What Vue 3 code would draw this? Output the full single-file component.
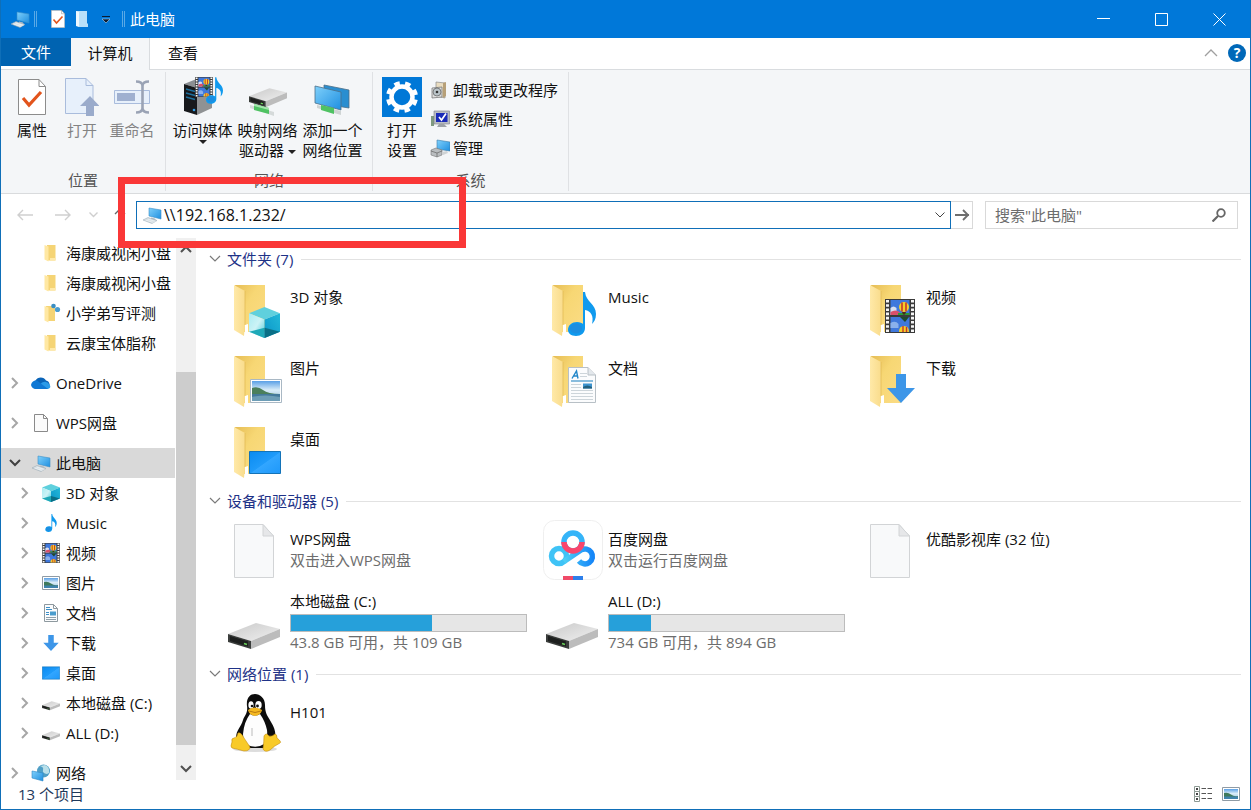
<template>
  <div class="window">
    <!-- 图标库 -->
    <svg class="sprite" width="0" height="0" aria-hidden="true">
      <defs>
        <linearGradient id="g-flap" x1="0" y1="0" x2="1" y2="0">
          <stop offset="0" stop-color="#ffe9a8" />
          <stop offset="1" stop-color="#f9dc8c" />
        </linearGradient>
        <linearGradient id="g-back" x1="0" y1="0" x2="1" y2="1">
          <stop offset="0" stop-color="#e6bd55" />
          <stop offset="0.4" stop-color="#f7d774" />
          <stop offset="1" stop-color="#fbdc85" />
        </linearGradient>
        <linearGradient id="g-screen" x1="0" y1="0" x2="1" y2="1">
          <stop offset="0" stop-color="#7fd0fb" />
          <stop offset="1" stop-color="#1e8fe0" />
        </linearGradient>
        <linearGradient id="g-desk" x1="0" y1="0" x2="1" y2="1">
          <stop offset="0" stop-color="#0a8bf0" />
          <stop offset="0.5" stop-color="#1f9bfa" />
          <stop offset="0.52" stop-color="#32a6ff" />
          <stop offset="1" stop-color="#1e98fa" />
        </linearGradient>
        <linearGradient id="g-cube-l" x1="0" y1="0" x2="1" y2="1">
          <stop offset="0" stop-color="#a8ecf2" />
          <stop offset="0.5" stop-color="#cdf3f6" />
          <stop offset="1" stop-color="#45cad8" />
        </linearGradient>
        <linearGradient id="g-cube-r" x1="1" y1="0" x2="0" y2="1">
          <stop offset="0" stop-color="#23b9d8" />
          <stop offset="1" stop-color="#0a94c8" />
        </linearGradient>
        <linearGradient id="g-sky" x1="0" y1="0" x2="0" y2="1">
          <stop offset="0" stop-color="#5aa0e6" />
          <stop offset="0.45" stop-color="#d9ecf8" />
          <stop offset="1" stop-color="#9cc3dd" />
        </linearGradient>
        <linearGradient id="g-metal" x1="0" y1="0" x2="1" y2="1">
          <stop offset="0" stop-color="#c9c9c9" />
          <stop offset="1" stop-color="#f0f0f0" />
        </linearGradient>
        <linearGradient id="g-ring" x1="0" y1="0" x2="1" y2="0">
          <stop offset="0" stop-color="#4fd0f5" />
          <stop offset="1" stop-color="#1687f8" />
        </linearGradient>
      </defs>

      <symbol id="i-pc" viewBox="0 0 20 20">
        <path d="M7 3l12 2v9L7 11z" fill="url(#g-screen)" stroke="#3b8fc8" stroke-width=".6" />
        <path d="M9 12.500l4 1 1 2-5-1z" fill="#b4bec5" />
        <path d="M1 15l5-2.500 9 3-5 3z" fill="#d5dde2" stroke="#93a5b0" stroke-width=".5" />
        <path d="M3.500 15l8 2.500M5.500 14l8 2.500" stroke="#f7fafc" stroke-width=".6" />
      </symbol>
      <symbol id="i-folder" viewBox="0 0 60 60">
        <path d="M10 7h30v47H18z" fill="url(#g-back)" />
        <path d="M9 7l11 6v34l-1 11-10-6z" fill="url(#g-flap)" />
        <path d="M20 13v34" stroke="#e0b850" stroke-width=".7" />
        <path d="M20 47l3-1v8h-3z" fill="#fff" />
      </symbol>
      <symbol id="i-cube" viewBox="0 0 30 30">
        <path d="M15 0l15 6-15 6L0 6z" fill="#5fd0dd" />
        <path d="M0 6l15 6v18L0 24z" fill="url(#g-cube-l)" />
        <path d="M30 6l-15 6v18l15-6z" fill="url(#g-cube-r)" />
        <path d="M0 24l15-4v10z" fill="#1fa9b8" />
        <path d="M15 20l15 4-15 6z" fill="#0a6f86" />
      </symbol>
      <symbol id="i-note" viewBox="0 0 28 44">
        <path d="M15 0h2c1 10 11 12 11 22 0 5-2 8-4 10 2-8-1-13-7-14v18c0 5-4 8-9 8s-8-3-8-6c0-5 4-8 9-8 3 0 5 1 6 2z" fill="#109aee" />
        <ellipse cx="8" cy="36.500" rx="6" ry="5" fill="#1c8ee0" />
      </symbol>
      <symbol id="i-film" viewBox="0 0 30 34">
        <path d="M0 0h30v34H0z" fill="#3a3a3a" />
        <path d="M2.500 1v32M27.500 1v32" stroke="#f5f5f5" stroke-width="3" stroke-dasharray="2.600 1.600" />
        <path d="M5.500 1h19v15h-19z" fill="#3f78dc" />
        <path d="M5.500 18h19v15h-19z" fill="#3f78dc" />
        <path d="M5.500 9q3-3 6 0v7h-6z" fill="#d7dff0" />
        <path d="M5.500 13q5-3 9 0v3h-9z" fill="#d9506a" />
        <path d="M13 14h11.500v2H13z" fill="#2f9a35" />
        <circle cx="19" cy="8" r="5" fill="#f3cf2b" />
        <path d="M17 3.500v9M21 3.500v9" stroke="#c83628" stroke-width="1.600" />
        <path d="M17 13h4l-1 2.500h-2z" fill="#4b2b18" />
        <path d="M15 18h9l-4 5z" fill="#1f4a2b" />
        <path d="M5.500 24q5-3 8 1v4h-8z" fill="#8ab0ec" />
        <path d="M14 33q0-6 5-6t5 6z" fill="#f3cf2b" />
        <path d="M18 27v6M21.500 28v5" stroke="#c83628" stroke-width="1.400" />
      </symbol>
      <symbol id="i-photo" viewBox="0 0 32 24">
        <path d="M.5.5h31v23H.5z" fill="#fff" stroke="#a9b8c4" />
        <path d="M2 2h28v20H2z" fill="url(#g-sky)" />
        <path d="M2 9q6-2 11 2t17 4v1H2z" fill="#4b7f5c" />
        <path d="M2 15h28v7H2z" fill="#44799a" />
        <path d="M2 18q14-3 28 0v4H2z" fill="#6d9db6" />
      </symbol>
      <symbol id="i-photo-sm" viewBox="0 0 18 14">
        <path d="M.5.5h17v13H.5z" fill="#fff" stroke="#8f9ba5" />
        <path d="M2 2h14v10H2z" fill="url(#g-sky)" />
        <path d="M2 6q4-1 7 1.500t7 1.500v1H2z" fill="#3f7a5c" />
        <path d="M2 9.500h14V12H2z" fill="#3f83ad" />
      </symbol>
      <symbol id="i-doc" viewBox="0 0 28 36">
        <path d="M.5.5H20l7.500 7.500v27.500H.5z" fill="#fbfcfd" stroke="#b8c0c6" />
        <path d="M20 .5V8h7.500" fill="#e3e8ec" stroke="#b8c0c6" />
        <path d="M4 11.500L8.500 4l1.500 7.500M5.500 9h4" fill="none" stroke="#2387c9" stroke-width="1.400" />
        <path d="M12 6.500h7M12 9.500h7M3 17.500h10M3 20.500h10M3 23.500h22M3 26.500h22M3 29.500h22M3 32.500h22" stroke="#cdd5da" />
        <path d="M3 14h22" stroke="#3c90c8" stroke-width="1.200" />
        <path d="M15 16.500h9v5h-9z" fill="#3d94cf" />
        <path d="M15 20q4-3 9 0v1.500h-9z" fill="#23617f" />
      </symbol>
      <symbol id="i-doc-sm" viewBox="0 0 16 18">
        <path d="M1.500.5h9l4 4v13h-13z" fill="#fbfcfd" stroke="#8e999f" />
        <path d="M10.500.5v4h4" fill="none" stroke="#8e999f" />
        <path d="M3 5.500h6M3 3.500h4M3 8.500h3M3 10.500h3" stroke="#3c90c8" />
        <path d="M7 7.500h6v4H7z" fill="#4b9dcd" />
        <path d="M3 13.500h10M3 15.500h10" stroke="#8fa0aa" />
      </symbol>
      <symbol id="i-down" viewBox="0 0 28 29">
        <path d="M9 0h10v14h9L14 29 0 14h9z" fill="#3d96e8" />
      </symbol>
      <symbol id="i-desk" viewBox="0 0 32 23">
        <path d="M.5.5h31v22H.5z" fill="url(#g-desk)" stroke="#1373b8" />
      </symbol>
      <symbol id="i-page" viewBox="0 0 40 54">
        <path d="M.5.5H29l10.500 11.500v41.500H.5z" fill="#f8f9fa" stroke="#d2d4d6" />
        <path d="M29 .5V12h10.500z" fill="#e6e7e9" stroke="#d2d4d6" />
      </symbol>
      <symbol id="i-page-sm" viewBox="0 0 20 20">
        <path d="M3.500 1.500h9l4 4v13h-13z" fill="#fbfbfb" stroke="#8a8a8a" />
        <path d="M12.500 1.500v4h4" fill="none" stroke="#8a8a8a" />
      </symbol>
      <symbol id="i-drive" viewBox="0 0 52 27">
        <path d="M0 11L28 0l24 6-29 12z" fill="url(#g-metal)" />
        <path d="M0 11l23 7v8L0 19z" fill="#3a3d3b" />
        <path d="M23 18l29-12v8L23 26z" fill="#bcbcbc" />
        <path d="M2 13l18 5.500v5L2 18z" fill="#1d1f1e" />
        <path d="M16 20.500l3 1" stroke="#6ad15b" stroke-width="1.800" />
      </symbol>
      <symbol id="i-cloud" viewBox="0 0 20 20">
        <path d="M5 16a4.500 4.500 0 0 1-.5-8.500A6 6 0 0 1 15 7.500 4.500 4.500 0 0 1 16 16z" fill="#0a64b8" />
        <path d="M4.500 16L11 9.500q5-2 7.500 2 2.500 4-2.500 4.500z" fill="#2b9be8" />
        <path d="M0 12q1-5 6-4.500l11 8.500H5q-4 0-5-4z" fill="#0f78d4" />
      </symbol>
      <symbol id="i-globe" viewBox="0 0 20 20">
        <circle cx="12.500" cy="8" r="6.500" fill="#4f9fc6" />
        <path d="M9 3q4 1 3 4t4 4l2-1q1-6-4-8z" fill="#b9dfe9" />
        <path d="M1 8l11 2v8L1 15z" fill="url(#g-screen)" stroke="#2c88c6" stroke-width=".6" />
      </symbol>
      <symbol id="i-fold-sm" viewBox="0 0 20 20">
        <path d="M6 2h8.500v15.500H6z" fill="#f5d475" />
        <path d="M3.500 2l4 1.500v15l-4-2z" fill="#ffe8a3" />
        <path d="M9 15h5.500v2.500H9z" fill="#ffe9a8" />
      </symbol>
      <symbol id="i-fold-sync" viewBox="0 0 20 20">
        <path d="M5 3h9v15H5z" fill="#f5d475" />
        <path d="M3.500 3l4 1.500v15l-4-2z" fill="#ffe8a3" />
        <circle cx="12.500" cy="3" r="2.300" fill="#3a8ec4" />
        <circle cx="16.500" cy="6.500" r="2.600" fill="#4b9dd0" />
      </symbol>
      <symbol id="i-check-page" viewBox="0 0 28 36">
        <path d="M.5.5H21l6.500 7v28H.5z" fill="#fff" stroke="#8c8c8c" />
        <path d="M21 .5v7h6.500" fill="none" stroke="#8c8c8c" />
        <path d="M5 19l6 7L23 13" fill="none" stroke="#e2541c" stroke-width="3.200" />
      </symbol>
      <symbol id="i-open" viewBox="0 0 34 38">
        <path d="M.5.5H21l7 7v28H.5z" fill="#e7f0fb" stroke="#a9bcdc" />
        <path d="M21 .5v7h7" fill="none" stroke="#a9bcdc" />
        <path d="M25 18l9.500 10H29v10h-8V28h-6z" fill="#9aabcb" />
      </symbol>
      <symbol id="i-rename" viewBox="0 0 36 34">
        <path d="M.5 10.500h35v13H.5z" fill="#e7f0fb" stroke="#a9bcdc" />
        <path d="M3 13h18v8H3z" fill="#9fb0d0" />
        <path d="M22 1.500q6 0 6.500 4v23q-.5 4-6.500 4M35 1.500q-6 0-6.500 4v23q.5 4 6.500 4" fill="none" stroke="#9aa3b5" stroke-width="2.600" />
      </symbol>
      <symbol id="i-media" viewBox="0 0 40 40">
        <path d="M1 7L16 1l13 4-15 6z" fill="#8b8f93" />
        <path d="M1 7l13 4v27L1 34z" fill="#17191c" />
        <path d="M14 11l15-6v26l-15 7z" fill="#8f9294" />
        <path d="M3 12l9 2.500M3 16l9 2.500M3 20l9 2.500" stroke="#1d6f9c" stroke-width="1.600" />
        <circle cx="11" cy="33" r="1.300" fill="#2f9ee8" />
        <use href="#i-film" x="12" y="0" width="18" height="20" />
        <use href="#i-note" x="23" y="0" width="17" height="27" />
      </symbol>
      <symbol id="i-netdrive" viewBox="0 0 40 40">
        <use href="#i-drive" x="1" y="11" width="38" height="20" />
        <path d="M2 28l24 7v4L2 31z" fill="#d5dada" />
        <path d="M6 27l15 4v6L6 33z" fill="#4fc263" />
        <path d="M6 27l15 4v2L6 29z" fill="#a5e5ae" />
      </symbol>
      <symbol id="i-netplace" viewBox="0 0 40 40">
        <path d="M11 8l25 5v18l-25-4z" fill="#2a8ed0" stroke="#4b6f88" stroke-width=".8" />
        <path d="M2 9l26 6v18L2 26z" fill="url(#g-screen)" stroke="#4b6f88" stroke-width=".8" />
        <path d="M4 28l24 6v4L4 31z" fill="#cfd4d4" />
        <path d="M8 28l13 3v6L8 33z" fill="#4fc263" />
      </symbol>
      <symbol id="i-gear" viewBox="0 0 40 40">
        <path d="M0 0h40v40H0z" fill="#0078d7" />
        <circle cx="20" cy="20" r="10.500" fill="none" stroke="#fff" stroke-width="4.500" />
        <circle cx="20" cy="20" r="14" fill="none" stroke="#fff" stroke-width="4" stroke-dasharray="5.500 5.496" stroke-dashoffset="-2.750" />
      </symbol>
      <symbol id="i-uninstall" viewBox="0 0 20 20">
        <path d="M6 2l9 1v15l-9-2z" fill="#e9dcc0" stroke="#8b8b8b" stroke-width=".7" />
        <path d="M13 3l3-1v14l-3 2z" fill="#b7a078" />
        <path d="M2 8l10-1v10l-10 1z" fill="#dedede" stroke="#6c6c6c" stroke-width=".7" />
        <circle cx="7" cy="12" r="4" fill="#b9c3c8" stroke="#4c4c4c" stroke-width=".6" />
        <circle cx="7" cy="12" r="1.300" fill="#333" />
      </symbol>
      <symbol id="i-sysprop" viewBox="0 0 20 20">
        <path d="M1 7h3v10H1z" fill="#7f9a80" />
        <path d="M4 2h15.500v13H4z" fill="#b9bdc3" stroke="#7d8288" stroke-width=".6" />
        <path d="M6 4h11.500v9H6z" fill="#1a2bb8" />
        <path d="M9 8l2.500 3L16 4.500" fill="none" stroke="#fff" stroke-width="1.700" />
        <path d="M9 15h5l3 3H7z" fill="#9ea3a8" />
      </symbol>
      <symbol id="i-manage" viewBox="0 0 20 20">
        <path d="M7 2l13 2v9L7 11z" fill="url(#g-screen)" stroke="#3b7ba8" stroke-width=".6" />
        <path d="M1 12l5-2 6 2v5l-5 2-6-2z" fill="#b9bdc0" stroke="#777" stroke-width=".6" />
        <path d="M1 13l6 2 5-2M7 15v4" fill="none" stroke="#666" stroke-width=".7" />
        <path d="M12 14l5-1 1 2-5 2z" fill="#cfd3d5" />
      </symbol>
      <symbol id="i-baidu" viewBox="0 0 60 60">
        <rect x=".5" y=".5" width="59" height="59" rx="11" fill="#fff" stroke="#efefef" />
        <circle cx="16" cy="36" r="7.500" fill="none" stroke="#3fc3f6" stroke-width="5.500" />
        <path d="M21 41.500L38 30A7.500 7.500 0 1 1 36 41" fill="none" stroke="url(#g-ring)" stroke-width="5.500" />
        <circle cx="30" cy="22" r="9" fill="none" stroke="#35b4f8" stroke-width="5.500" />
        <path d="M21 22a9 9 0 0 0 18 0" fill="none" stroke="#f9466c" stroke-width="5.500" />
        <path d="M20 56h10v4H20z" fill="#f04a68" />
        <path d="M30 56h10v4H30z" fill="#2d7fea" />
      </symbol>
      <symbol id="i-tux" viewBox="0 0 60 60">
        <ellipse cx="30" cy="55" rx="22" ry="3" fill="#ddd" />
        <path d="M22 12C21 4 25 0 30 0s10 4 10 11c0 8 2 10 6 17 4 6 5 12 4 17l-8 9H20l-9-10c0-8 5-11 7-18 2-5 5-7 4-14z" fill="#0c0c0c" />
        <path d="M25 20q5 3 10 0 5 7 7 16 1 8-3 14-7 5-17 1-4-3-4-11 1-12 7-20z" fill="#fdfdfd" />
        <ellipse cx="26" cy="11" rx="2.600" ry="3.800" fill="#fff" />
        <ellipse cx="33.500" cy="11" rx="3.200" ry="4" fill="#fff" />
        <circle cx="27" cy="12" r="1.300" fill="#111" />
        <circle cx="32.500" cy="12" r="1.400" fill="#111" />
        <path d="M23 16q6-5 14 0-1 5-7 6-6-1-7-6z" fill="#f5b921" />
        <path d="M24 17q6 3 12 0" fill="none" stroke="#b97a10" />
        <path d="M27 34v8" stroke="#bbb" />
        <path d="M13 39q3-1 6 5l6 9q0 4-6 4-7-2-12-3-2-1 0-6-1-4 2-4 3 0 4-5z" fill="#f8ca28" stroke="#c48d10" stroke-width=".6" />
        <path d="M39 42q2-4 5 0 3 1 6-2 2 0 2 4 5 4 3 5-6 3-10 7-5 3-7-1 1-8 1-13z" fill="#f8ca28" stroke="#c48d10" stroke-width=".6" />
      </symbol>
    </svg>

    <header class="titlebar">
      <svg class="ic20"><use href="#i-pc" /></svg>
      <span class="title-sep"></span>
      <button class="quick" aria-label="属性">
        <svg width="14" height="18"><use href="#i-check-page" /></svg>
      </button>
      <button class="quick" aria-label="新建文件夹">
        <svg width="14" height="18" viewBox="0 0 14 18">
          <path d="M1 1h11v12l1 1v3H4z" fill="#b8e0fa" />
          <path d="M1 1l3 1v15l-3-1z" fill="#eef8ff" />
        </svg>
      </button>
      <button class="quick" aria-label="自定义快速访问工具栏">
        <svg width="10" height="10" viewBox="0 0 10 10">
          <path d="M1 2.500h8" stroke="#0b1c33" />
          <path d="M1 5h8L5 9z" fill="#0b1c33" stroke="#cfe6fa" stroke-width=".5" />
        </svg>
      </button>
      <span class="title-sep"></span>
      <span class="title">此电脑</span>
      <div class="controls">
        <button aria-label="最小化">
          <svg width="13" height="13" viewBox="0 0 13 13"><path d="M0 5.500h13" /></svg>
        </button>
        <button aria-label="最大化">
          <svg width="13" height="13" viewBox="0 0 13 13"><path d="M.5.5h12v12H.5z" /></svg>
        </button>
        <button aria-label="关闭">
          <svg width="13" height="13" viewBox="0 0 13 13"><path d="M.5.5l12 12M12.500.5l-12 12" /></svg>
        </button>
      </div>
    </header>

    <nav class="tabs">
      <button class="tab tab-file">文件</button>
      <button class="tab tab-active">计算机</button>
      <button class="tab">查看</button>
      <div class="tabs-right">
        <button aria-label="最小化功能区">
          <svg width="14" height="8" viewBox="0 0 14 8"><path d="M1 7l6-6 6 6" fill="none" stroke="#a0a0a0" stroke-width="1.300" /></svg>
        </button>
        <button class="help" aria-label="帮助">?</button>
      </div>
    </nav>

    <section class="ribbon">
      <div v-for="group in ribbon" :key="group.name" class="group">
        <div class="group-body">
          <button
            v-for="btn in group.buttons"
            :key="btn.icon"
            :class="['big', group.size]"
            :disabled="btn.disabled"
          >
            <span class="big-icon">
              <svg :width="btn.w" :height="btn.h"><use :href="'#' + btn.icon" /></svg>
            </span>
            <span v-for="(line, i) in btn.lines" :key="line" class="line">
              {{ line }}<span v-if="btn.menu && i === btn.lines.length - 1 && i > 0" class="caret"></span>
            </span>
            <span v-if="btn.menu && btn.lines.length === 1" class="caret"></span>
          </button>
          <div v-if="group.links" class="links">
            <button v-for="link in group.links" :key="link.text" class="link">
              <svg class="ic20"><use :href="'#' + link.icon" /></svg>{{ link.text }}
            </button>
          </div>
        </div>
        <div class="group-name">{{ group.name }}</div>
      </div>
    </section>

    <div class="navbar">
      <div class="history">
        <button aria-label="后退">
          <svg width="16" height="12" viewBox="0 0 16 12"><path d="M16 6H1M6 1L1 6l5 5" /></svg>
        </button>
        <button aria-label="前进">
          <svg width="16" height="12" viewBox="0 0 16 12"><path d="M0 6h15M10 1l5 5-5 5" /></svg>
        </button>
        <button class="recent" aria-label="最近浏览的位置">
          <svg width="9" height="6" viewBox="0 0 9 6"><path d="M.5.5l4 4 4-4" /></svg>
        </button>
        <button class="up" aria-label="上移">
          <svg width="12" height="14" viewBox="0 0 12 14"><path d="M6 14V1M1 6l5-5 5 5" /></svg>
        </button>
      </div>
      <div class="address">
        <svg class="ic20"><use href="#i-pc" /></svg>
        <input v-model="address" type="text" aria-label="地址" />
        <button aria-label="以前的位置">
          <svg width="10" height="6" viewBox="0 0 10 6"><path d="M.5.5L5 5 9.500.5" fill="none" stroke="#444" /></svg>
        </button>
      </div>
      <button class="go" aria-label="转到">
        <svg width="16" height="12" viewBox="0 0 16 12"><path d="M1 6h14M9 1l5 5-5 5" fill="none" stroke="#6e6e6e" stroke-width="1.800" /></svg>
      </button>
      <div class="search">
        <input v-model="keyword" type="text" placeholder='搜索"此电脑"' aria-label="搜索" />
        <svg width="14" height="14" viewBox="0 0 14 14">
          <circle cx="9" cy="5" r="3.800" fill="none" stroke="#666" stroke-width="1.800" />
          <path d="M6 8l-5.500 5.500" stroke="#666" stroke-width="2.200" />
        </svg>
      </div>
      <div class="highlight"></div>
    </div>

    <main class="main">
      <aside class="sidebar">
        <ul class="tree">
          <li v-for="(node, i) in tree" :key="i" :class="{ spaced: node.spaced }">
            <button :class="['node', 'level-' + node.level, { selected: node.open }]">
              <span class="twisty">
                <svg v-if="node.open" width="12" height="8" viewBox="0 0 12 8"><path d="M1 1l5 5 5-5" fill="none" stroke="#404040" stroke-width="2" /></svg>
                <svg v-else-if="!node.leaf" width="8" height="12" viewBox="0 0 8 12"><path d="M1 1l5 5-5 5" fill="none" stroke="#a6a6a6" stroke-width="2" /></svg>
              </span>
              <svg class="ic20"><use :href="'#' + node.icon" :x="(20 - node.w) / 2" :y="node.y || (20 - node.h) / 2" :width="node.w" :height="node.h" /></svg>
              <span>{{ node.text }}</span>
            </button>
          </li>
        </ul>
      </aside>
      <div class="scrollbar">
        <button aria-label="向上滚动">
          <svg width="12" height="8" viewBox="0 0 12 8"><path d="M1 7l5-5 5 5" /></svg>
        </button>
        <div class="track"><div class="thumb"></div></div>
        <button aria-label="向下滚动">
          <svg width="12" height="8" viewBox="0 0 12 8"><path d="M1 1l5 5 5-5" /></svg>
        </button>
      </div>

      <div class="content">
        <section v-for="sec in sections" :key="sec.title" class="section">
          <h2>
            <svg width="12" height="8" viewBox="0 0 12 8"><path d="M1 1l5 5 5-5" fill="none" stroke="#7a7a7a" stroke-width="1.200" /></svg>
            <span>{{ sec.title }} ({{ sec.count }})</span>
          </h2>
          <div :class="['tiles', { folders: sec.folders }]">
            <div v-for="item in sec.items" :key="item.name" :class="['tile', { drive: item.used }]">
              <svg class="tile-icon" viewBox="0 0 60 60">
                <use v-if="sec.folders" href="#i-folder" width="60" height="60" />
                <use :href="'#' + item.icon" :x="item.box[0]" :y="item.box[1]" :width="item.box[2]" :height="item.box[3]" />
              </svg>
              <div class="tile-text">
                <div>{{ item.name }}</div>
                <div v-if="item.used" class="usage">
                  <div class="used" :style="{ width: item.used + '%' }"></div>
                </div>
                <div v-if="item.note" class="note">{{ item.note }}</div>
              </div>
            </div>
          </div>
        </section>
      </div>
    </main>

    <footer class="statusbar">
      <span>13 个项目</span>
      <div class="views">
        <button aria-label="详细信息">
          <svg width="18" height="16" viewBox="0 0 18 16">
            <path d="M.5.5h5v5h-5zM.5 5.500h5v5h-5zM.5 10.500h5v5h-5z" fill="#fff" stroke="#8d9a94" />
            <path d="M2 3h2M2 8h2M2 13h2" stroke="#444" stroke-width="2" />
            <path d="M7.500 2.500H12M13.500 2.500H18M7.500 7.500H12M13.500 7.500H18M7.500 12.500H12M13.500 12.500H18" stroke="#555" />
          </svg>
        </button>
        <button aria-label="大缩略图">
          <svg width="18" height="14"><use href="#i-photo-sm" /></svg>
        </button>
      </div>
    </footer>
  </div>
</template>

<script setup>
import { ref } from 'vue'

const address = ref('\\\\192.168.1.232/')
const keyword = ref('')

// 功能区分组
const ribbon = [
  {
    name: '位置',
    size: 'w50',
    buttons: [
      { icon: 'i-check-page', w: 28, h: 36, lines: ['属性'] },
      { icon: 'i-open', w: 34, h: 38, lines: ['打开'], disabled: true },
      { icon: 'i-rename', w: 36, h: 34, lines: ['重命名'], disabled: true }
    ]
  },
  {
    name: '网络',
    size: 'w65',
    buttons: [
      { icon: 'i-media', w: 40, h: 40, lines: ['访问媒体'], menu: true },
      { icon: 'i-netdrive', w: 40, h: 40, lines: ['映射网络', '驱动器'], menu: true },
      { icon: 'i-netplace', w: 40, h: 40, lines: ['添加一个', '网络位置'] }
    ]
  },
  {
    name: '系统',
    size: 'w50',
    buttons: [{ icon: 'i-gear', w: 40, h: 40, lines: ['打开', '设置'] }],
    links: [
      { icon: 'i-uninstall', text: '卸载或更改程序' },
      { icon: 'i-sysprop', text: '系统属性' },
      { icon: 'i-manage', text: '管理' }
    ]
  }
]

// 左侧导航
const tree = [
  { text: '海康威视闲小盘', icon: 'i-fold-sm', level: 2, w: 20, h: 20, leaf: true },
  { text: '海康威视闲小盘', icon: 'i-fold-sm', level: 2, w: 20, h: 20, leaf: true },
  { text: '小学弟写评测', icon: 'i-fold-sync', level: 2, w: 20, h: 20, leaf: true },
  { text: '云康宝体脂称', icon: 'i-fold-sm', level: 2, w: 20, h: 20, leaf: true },
  { text: 'OneDrive', icon: 'i-cloud', level: 1, w: 20, h: 20, spaced: true },
  { text: 'WPS网盘', icon: 'i-page-sm', level: 1, w: 20, h: 20, spaced: true },
  { text: '此电脑', icon: 'i-pc', level: 1, w: 20, h: 20, spaced: true, open: true },
  { text: '3D 对象', icon: 'i-cube', level: 2, w: 18, h: 18 },
  { text: 'Music', icon: 'i-note', level: 2, w: 12, h: 18 },
  { text: '视频', icon: 'i-film', level: 2, w: 18, h: 20 },
  { text: '图片', icon: 'i-photo-sm', level: 2, w: 18, h: 14 },
  { text: '文档', icon: 'i-doc-sm', level: 2, w: 16, h: 18 },
  { text: '下载', icon: 'i-down', level: 2, w: 16, h: 16 },
  { text: '桌面', icon: 'i-desk', level: 2, w: 18, h: 14 },
  { text: '本地磁盘 (C:)', icon: 'i-drive', level: 2, w: 18, h: 10, y: 8 },
  { text: 'ALL (D:)', icon: 'i-drive', level: 2, w: 18, h: 10, y: 8 },
  { text: '网络', icon: 'i-globe', level: 1, w: 20, h: 20, spaced: true }
]

// box: 图标在 60x60 画布中的 x, y, 宽, 高
const sections = [
  {
    title: '文件夹',
    count: 7,
    folders: true,
    items: [
      { name: '3D 对象', icon: 'i-cube', box: [24, 29, 31, 31] },
      { name: 'Music', icon: 'i-note', box: [25, 14, 28, 44] },
      { name: '视频', icon: 'i-film', box: [24, 21, 30, 34] },
      { name: '图片', icon: 'i-photo', box: [25, 30, 32, 24] },
      { name: '文档', icon: 'i-doc', box: [25, 18, 28, 36] },
      { name: '下载', icon: 'i-down', box: [26, 25, 28, 29] },
      { name: '桌面', icon: 'i-desk', box: [24, 31, 32, 23] }
    ]
  },
  {
    title: '设备和驱动器',
    count: 5,
    items: [
      { name: 'WPS网盘', icon: 'i-page', box: [9, 4, 40, 54], note: '双击进入WPS网盘' },
      { name: '百度网盘', icon: 'i-baidu', box: [0, 0, 60, 60], note: '双击运行百度网盘' },
      { name: '优酷影视库 (32 位)', icon: 'i-page', box: [9, 4, 40, 54] },
      { name: '本地磁盘 (C:)', icon: 'i-drive', box: [3, 30, 52, 27], used: 60, note: '43.8 GB 可用，共 109 GB' },
      { name: 'ALL (D:)', icon: 'i-drive', box: [3, 30, 52, 27], used: 18, note: '734 GB 可用，共 894 GB' }
    ]
  },
  {
    title: '网络位置',
    count: 1,
    items: [{ name: 'H101', icon: 'i-tux', box: [0, 1, 60, 60] }]
  }
]
</script>

<style>
body {
  margin: 0;
}
</style>

<style scoped>
.window {
  box-sizing: border-box;
  height: 100vh;
  display: flex;
  flex-direction: column;
  border: 1px solid #0f6fb8;
  border-top: none;
  background: #fff;
  color: #111;
  font-family: 'Open Sans', 'Noto Sans CJK SC', sans-serif;
  font-size: 15px;
  line-height: 20px;
  overflow: hidden;
}

.sprite {
  position: absolute;
}

button,
input {
  font: inherit;
  color: inherit;
  border: none;
  background: none;
  padding: 0;
  margin: 0;
}

svg {
  display: block;
  flex: none;
}

.ic20 {
  width: 20px;
  height: 20px;
}

/* 标题栏 */
.titlebar {
  flex: none;
  display: flex;
  align-items: center;
  height: 38px;
  margin: 0 -1px;
  padding-left: 10px;
  background: #0078d9;
  color: #fff;
}

.title-sep {
  width: 1px;
  height: 16px;
  margin: 0 4px;
  border: solid #5aa9e6;
  border-width: 0 1px;
}

.quick {
  display: flex;
  justify-content: center;
  width: 24px;
}

.title-sep + .quick {
  margin-left: 5px;
}

.title {
  margin-left: 1px;
}

.controls {
  display: flex;
  align-self: stretch;
  margin-left: auto;
  padding-right: 3px;
}

.controls button {
  display: flex;
  align-items: center;
  justify-content: center;
  width: 58px;
}

.controls path {
  fill: none;
  stroke: #fff;
}

/* 选项卡 */
.tabs {
  flex: none;
  display: flex;
  align-items: flex-start;
  height: 31px;
  border-bottom: 1px solid #d9dcdf;
}

.tab {
  width: 66px;
  height: 30px;
}

.tab-file {
  width: 70px;
  height: 28px;
  background: #0063b1;
  color: #fff;
}

.tab-active {
  width: 79px;
  height: 32px;
  padding-bottom: 2px;
  background: #f4f6f8;
  border-right: 1px solid #d9dcdf;
}

.tabs-right {
  display: flex;
  align-items: center;
  gap: 10px;
  height: 30px;
  margin-left: auto;
  padding-right: 4px;
}

.help {
  width: 18px;
  height: 18px;
  border-radius: 50%;
  background: #0068b8;
  color: #fff;
  font-size: 14px;
  font-weight: 700;
  line-height: 18px;
}

/* 功能区 */
.ribbon {
  flex: none;
  display: flex;
  padding: 2px 0;
  background: #f4f6f8;
  border-bottom: 1px solid #d9dbdd;
}

.group {
  display: flex;
  flex-direction: column;
  justify-content: space-between;
  box-sizing: border-box;
  border-right: 1px solid #dfe1e4;
  height: 119px;
  padding-bottom: 1px;
}

.group-body {
  display: flex;
  align-items: flex-start;
  padding: 5px 8px 0 6px;
}

.group:nth-child(2) .group-body,
.group:nth-child(3) .group-body {
  padding: 5px 7px 0 4px;
}

.big {
  display: flex;
  flex-direction: column;
  align-items: center;
  white-space: nowrap;
}

.w50 {
  width: 50px;
}

.w65 {
  width: 65px;
}

.big:disabled {
  color: #838383;
}

.big-icon {
  display: flex;
  align-items: center;
  height: 40px;
  margin-bottom: 3px;
}

.caret {
  display: inline-block;
  border: 4px solid transparent;
  border-top-color: #222;
  border-bottom: none;
  vertical-align: middle;
}

.line .caret {
  margin-left: 4px;
}

.links {
  display: flex;
  flex-direction: column;
  gap: 9px;
  padding: 3px 3px 0;
}

.link {
  display: flex;
  align-items: center;
  gap: 3px;
  white-space: nowrap;
}

.group-name {
  text-align: center;
  color: #555;
}

/* 导航栏 */
.navbar {
  position: relative;
  box-sizing: border-box;
  flex: none;
  display: flex;
  align-items: center;
  height: 44px;
  padding: 0 12px 2px 0;
}

.history {
  display: flex;
  align-items: center;
  flex: none;
  width: 119px;
  padding-left: 16px;
  gap: 22px;
}

.history .recent {
  margin-left: -4px;
}

.history .up {
  margin-left: -6px;
}

.history path {
  fill: none;
  stroke: #cfcfcf;
  stroke-width: 1.400;
}

.history .up path {
  stroke: #666;
}

.address {
  box-sizing: border-box;
  display: flex;
  align-items: center;
  flex: 1;
  height: 28px;
  padding: 0 5px;
  border: 1px solid #0f6fb8;
}

.address input {
  flex: 1;
  min-width: 0;
  padding-left: 2px;
  font-size: 16px;
  outline: none;
}

.go {
  box-sizing: border-box;
  display: flex;
  align-items: center;
  justify-content: center;
  width: 22px;
  height: 28px;
  border: 1px solid #d9d9d9;
  border-left: none;
}

.search {
  box-sizing: border-box;
  display: flex;
  align-items: center;
  width: 253px;
  height: 28px;
  margin-left: 12px;
  padding: 0 11px 0 9px;
  border: 1px solid #d9d9d9;
}

.search input {
  flex: 1;
  min-width: 0;
  outline: none;
}

.search input::placeholder {
  color: #6d6d6d;
  opacity: 1;
}

.highlight {
  position: absolute;
  z-index: 2;
  box-sizing: border-box;
  left: 117px;
  top: -17px;
  width: 348px;
  height: 71px;
  border: 7px solid #fa3737;
  pointer-events: none;
}

/* 主体 */
.main {
  display: flex;
  flex: 1;
  min-height: 0;
}

.sidebar {
  flex: none;
  width: 174px;
  overflow: hidden;
}

.tree {
  list-style: none;
  margin: 0;
  padding: 0;
}

.spaced {
  margin-top: 10px;
}

.node {
  display: flex;
  align-items: center;
  gap: 5px;
  width: 100%;
  height: 30px;
  padding-left: 4px;
  text-align: left;
  white-space: nowrap;
}

.level-2 {
  padding-left: 14px;
}

.selected {
  background: #d9d9d9;
}

.twisty {
  display: flex;
  justify-content: center;
  width: 20px;
  padding-right: 1px;
}

.scrollbar {
  flex: none;
  display: flex;
  flex-direction: column;
  width: 20px;
  margin: 0 0 4px 1px;
  background: #f0f0f0;
}

.scrollbar button {
  display: flex;
  align-items: center;
  justify-content: center;
  height: 22px;
}

.scrollbar path {
  fill: none;
  stroke: #505050;
  stroke-width: 2;
}

.track {
  display: flex;
  flex-direction: column;
  flex: 1;
}

.track::before {
  content: '';
  flex: 112;
}

.thumb {
  flex: 373;
  background: #cdcdcd;
}

.track::after {
  content: '';
  flex: 13;
}

.content {
  flex: 1;
  min-width: 0;
  padding: 9px 9px 0 13px;
  overflow: hidden;
}

.section {
  margin-bottom: 9px;
}

h2 {
  display: flex;
  align-items: center;
  gap: 6px;
  height: 24px;
  margin: 0 0 5px;
  font-size: 15px;
  font-weight: 400;
  color: #1e3287;
}

h2::after {
  content: '';
  flex: 1;
  height: 1px;
  margin-left: 2px;
  background: #e2e2e2;
}

.tiles {
  display: grid;
  grid-template-columns: repeat(auto-fill, 318px);
  padding-left: 16px;
}

.folders {
  row-gap: 9px;
}

.tile {
  display: flex;
  align-items: flex-start;
  gap: 5px;
}

.tile-icon {
  width: 60px;
  height: 60px;
  margin-top: 2px;
}

.drive {
  align-items: flex-end;
}

.tile-text {
  flex: 1;
  padding: 11px 16px 0 0;
  line-height: 21px;
}

.usage {
  box-sizing: border-box;
  height: 18px;
  margin-top: 2px;
  border: 1px solid #bcbcbc;
  background: #e6e6e6;
}

.used {
  height: 100%;
  background: #26a0da;
}

.note {
  color: #6d6d6d;
}

/* 状态栏 */
.statusbar {
  flex: none;
  display: flex;
  align-items: center;
  justify-content: space-between;
  box-sizing: border-box;
  height: 25px;
  padding: 0 10px 5px 17px;
  color: #1e395b;
}

.views {
  display: flex;
  align-items: center;
  gap: 10px;
}
</style>
